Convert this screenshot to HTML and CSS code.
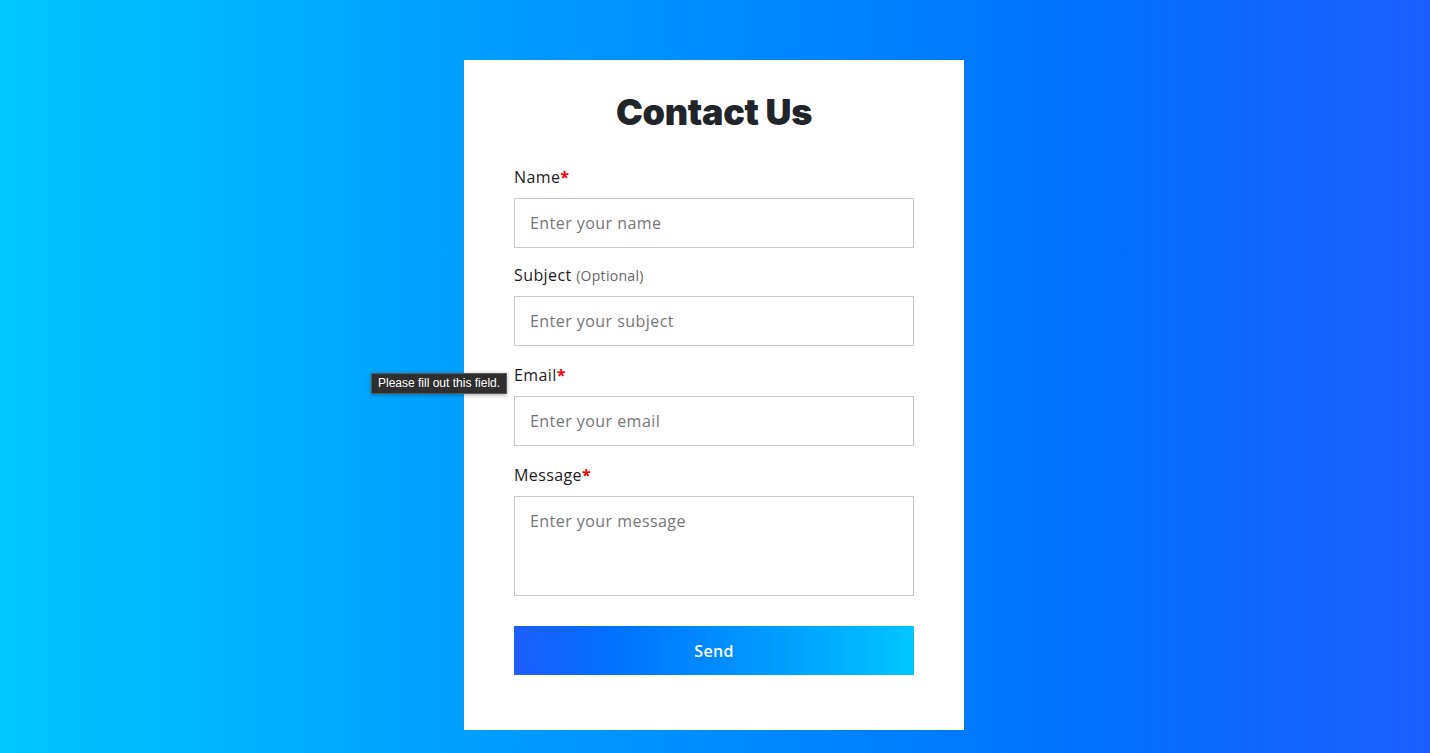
FILE: index.html
```html
<!DOCTYPE html>
<html lang="en">
<head>
<meta charset="utf-8">
<title>Contact Us</title>
<link rel="stylesheet" href="styles.css">
</head>
<body>
<main class="page">
  <form class="card">
    <h1 class="title">Contact Us</h1>
    <div class="field field-first">
      <label class="label">Name<span class="req">*</span></label>
      <input class="input" type="text" placeholder="Enter your name">
    </div>
    <div class="field field-second">
      <label class="label">Subject <span class="opt">(Optional)</span></label>
      <input class="input" type="text" placeholder="Enter your subject">
    </div>
    <div class="field">
      <label class="label">Email<span class="req">*</span></label>
      <input class="input" type="email" placeholder="Enter your email">
      <div class="tooltip">Please fill out this field.</div>
    </div>
    <div class="field">
      <label class="label">Message<span class="req">*</span></label>
      <textarea class="input textarea" placeholder="Enter your message"></textarea>
    </div>
    <button class="send" type="button">Send</button>
  </form>
</main>
</body>
</html>
```
FILE: styles.css
```css
* { box-sizing: border-box; }
html, body { margin: 0; padding: 0; height: 100%; }
body {
  font-family: "Open Sans", "Liberation Sans", sans-serif;
  background: linear-gradient(90deg, #00c6ff 0%, #0096ff 40%, #0072ff 75%, #1e5eff 100%);
  min-height: 753px;
}
.page {
  display: flex;
  justify-content: center;
  padding-top: 60px;
  padding-right: 2px;
}
.card {
  width: 500px;
  height: 670px;
  background: #fff;
  padding: 105px 50px 0;
  display: flex;
  flex-direction: column;
  position: relative;
}
.title {
  position: absolute;
  left: 0; right: 0; top: 28px;
  margin: 0;
  text-align: center;
  font-family: "Inter", sans-serif;
  font-weight: 900;
  font-size: 36px;
  letter-spacing: -0.3px;
  color: #212529;
  line-height: 48px;
}
.field {
  display: flex;
  flex-direction: column;
  margin-top: 17px;
  position: relative;
}
.field-first { margin-top: 0; }
.field-second { margin-top: 15px; }
.label {
  display: block;
  height: 24px;
  font-size: 16px;
  line-height: 24px;
  color: #1c1c1c;
  margin-bottom: 9px;
  letter-spacing: 0.4px;
  white-space: nowrap;
}
.req { color: #ff0000; font-weight: 700; }
.opt { font-size: 14px; color: #666; letter-spacing: 0.3px; }
.input {
  width: 400px;
  height: 50px;
  border: 1px solid #c8c8c8;
  padding: 0 15px;
  font-family: "Open Sans", "Liberation Sans", sans-serif;
  font-size: 16px;
  letter-spacing: 0.45px;
  color: #333;
  outline: none;
  background: #fff;
}
.input::placeholder { color: #767676; }
.textarea {
  height: 100px;
  padding: 13px 15px;
  resize: none;
  display: block;
}
.send {
  margin-top: 30px;
  width: 400px;
  height: 49px;
  border: none;
  color: #fff;
  font-family: "Open Sans", "Liberation Sans", sans-serif;
  font-weight: 600;
  font-size: 16px;
  letter-spacing: 0.3px;
  background: linear-gradient(90deg, #1e5eff 0%, #0072ff 25%, #0096ff 60%, #00c6ff 100%);
}
.tooltip {
  position: absolute;
  left: -143px;
  top: 10px;
  height: 21px;
  padding: 0 6px;
  background: #2f2f2f;
  border: 1px solid #5a5a5a;
  color: #fff;
  font-family: "Liberation Sans", sans-serif;
  font-size: 12px;
  line-height: 19px;
  white-space: nowrap;
  box-shadow: 0 1px 4px rgba(0,0,0,0.35);
}
```
